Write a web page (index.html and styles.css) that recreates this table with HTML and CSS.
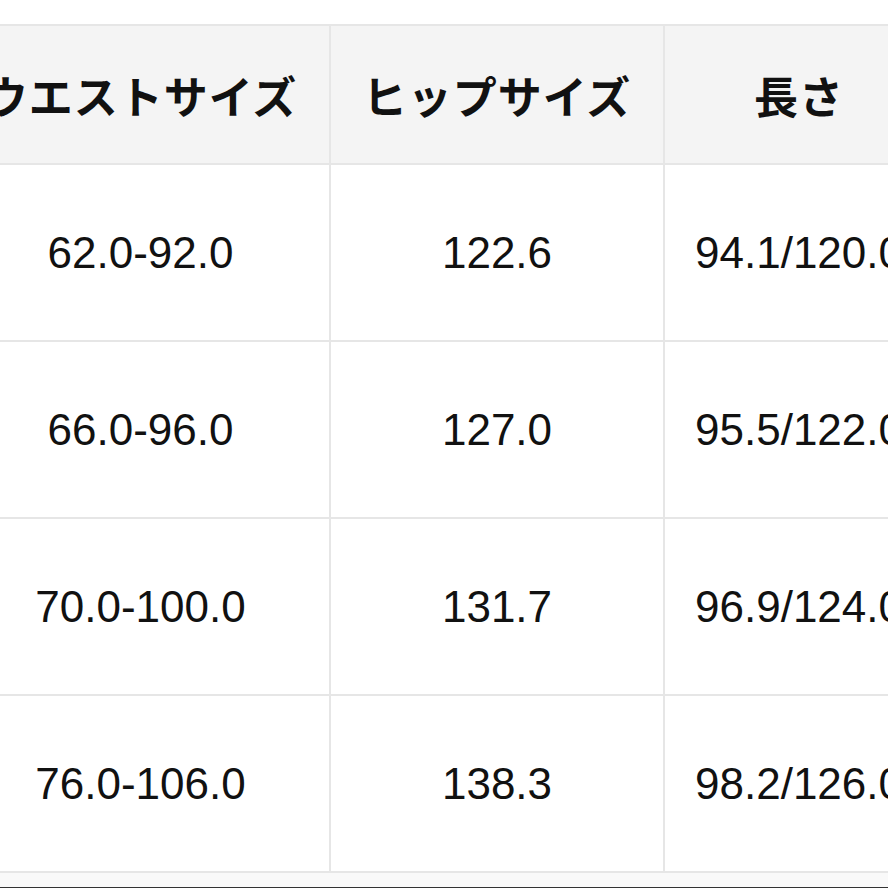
FILE: index.html
```html
<!DOCTYPE html>
<html lang="ja">
<head>
<meta charset="utf-8">
<title>サイズ表</title>
<link rel="stylesheet" href="styles.css">
</head>
<body>
<div class="page">
  <div class="viewport">
    <table class="size-table">
      <colgroup>
        <col class="col-waist">
        <col class="col-hip">
        <col class="col-length">
      </colgroup>
      <thead>
        <tr class="head-row">
          <th>ウエストサイズ</th>
          <th>ヒップサイズ</th>
          <th>長さ</th>
        </tr>
      </thead>
      <tbody>
        <tr><td>62.0-92.0</td><td>122.6</td><td>94.1/120.0</td></tr>
        <tr><td>66.0-96.0</td><td>127.0</td><td>95.5/122.0</td></tr>
        <tr><td>70.0-100.0</td><td>131.7</td><td>96.9/124.0</td></tr>
        <tr><td>76.0-106.0</td><td>138.3</td><td>98.2/126.0</td></tr>
      </tbody>
    </table>
  </div>
  <div class="footer-strip"></div>
  <div class="footer-bar"></div>
</div>
</body>
</html>
```

FILE: styles.css
```css
html, body {
  margin: 0;
  padding: 0;
  background: #ffffff;
}

.page {
  width: 888px;
  height: 888px;
  overflow: hidden;
  padding-top: 24px;
  box-sizing: border-box;
}

.viewport {
  width: 888px;
  overflow: hidden;
}

.size-table {
  width: 983px;
  margin-left: -48px;
  border-collapse: separate;
  border-spacing: 0;
  table-layout: fixed;
  border-top: 2px solid #e6e6e6;
}

.col-waist { width: 379px; }
.col-hip { width: 334px; }
.col-length { width: 270px; }

.size-table th,
.size-table td {
  padding: 0;
  text-align: center;
  vertical-align: middle;
  border-right: 2px solid #e6e6e6;
  border-bottom: 2px solid #e6e6e6;
  color: #111111;
  white-space: nowrap;
}

.head-row th {
  height: 139px;
  box-sizing: border-box;
  background: #f4f4f4;
  font-family: "Noto Sans CJK JP", "Noto Sans", sans-serif;
  font-weight: 700;
  font-size: 44px;
  line-height: 1;
  letter-spacing: 1px;
}

.size-table td {
  height: 177px;
  box-sizing: border-box;
  font-family: "Liberation Sans", Arial, sans-serif;
  font-size: 44px;
  font-weight: 400;
  line-height: 1;
}

.footer-strip {
  height: 14px;
  background: #f9f9f9;
}

.footer-bar {
  height: 4px;
  background: #333333;
}
```
